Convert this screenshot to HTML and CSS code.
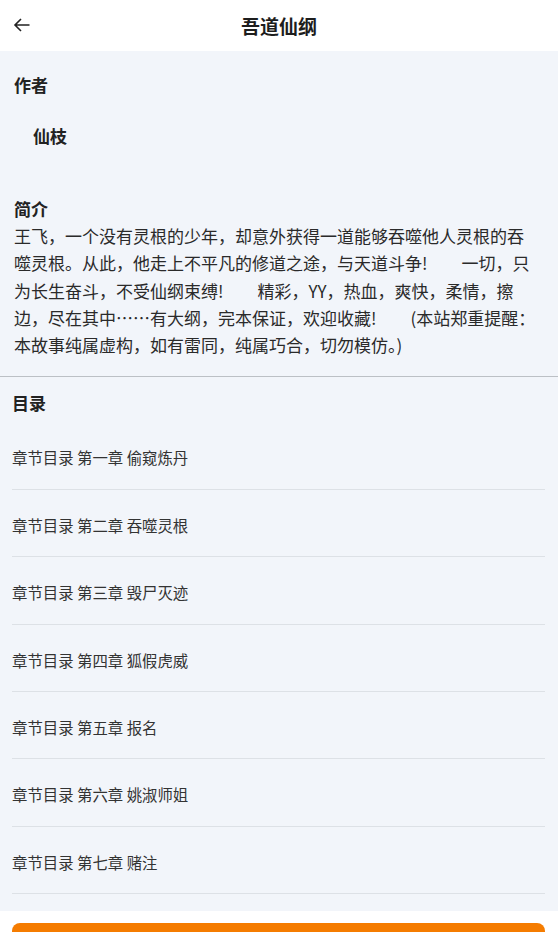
FILE: index.html
```html
<!doctype html>
<html lang="zh-CN">
  <head>
    <meta charset="UTF-8" />
    <meta name="viewport" content="width=device-width, initial-scale=1.0" />
    <title>吾道仙纲</title>
    <link rel="stylesheet" href="styles.css">
  </head>
  <body>
    <header class="topbar">
      <svg class="back" width="18" height="18" viewBox="0 0 18 18">
        <path d="M16.5 9H2M8 3L2 9l6 6" fill="none" stroke="#222" stroke-width="1.6" />
      </svg>
      <h1 class="title">吾道仙纲</h1>
    </header>

    <main class="detail">
      <section class="info">
        <h2 class="label">作者</h2>
        <p class="author">仙枝</p>
        <h2 class="label intro-label">简介</h2>
        <p class="intro">王飞，一个没有灵根的少年，却意外获得一道能够吞噬他人灵根的吞噬灵根。从此，他走上不平凡的修道之途，与天道斗争!　　一切，只为长生奋斗，不受仙纲束缚!　　精彩，YY，热血，爽快，柔情，擦边，尽在其中……有大纲，完本保证，欢迎收藏!　　(本站郑重提醒：本故事纯属虚构，如有雷同，纯属巧合，切勿模仿。)</p>
      </section>

      <section class="catalog">
        <h2 class="label">目录</h2>
        <ul class="chapters">
          <li>章节目录 第一章 偷窥炼丹</li>
          <li>章节目录 第二章 吞噬灵根</li>
          <li>章节目录 第三章 毁尸灭迹</li>
          <li>章节目录 第四章 狐假虎威</li>
          <li>章节目录 第五章 报名</li>
          <li>章节目录 第六章 姚淑师姐</li>
          <li>章节目录 第七章 赌注</li>
        </ul>
      </section>
    </main>

    <footer class="actions">
      <button class="read-btn">开始阅读</button>
    </footer>
  </body>
</html>
```

FILE: styles.css
```css
body {
  margin: 0;
  font-family: "Noto Sans CJK SC", "Noto Sans", sans-serif;
  color: #222;
  background: #fff;
}
.topbar {
  height: 51px;
  display: flex;
  align-items: center;
  justify-content: center;
  position: relative;
  background: #fff;
}
.back {
  position: absolute;
  left: 13px;
  top: 16px;
}
.title {
  margin: 0;
  font-size: 19px;
  font-weight: bold;
  color: #1d1d1d;
}
.detail {
  background: #f2f5fa;
  padding-bottom: 17px;
}
.label {
  margin: 0;
  font-size: 17px;
  line-height: 27px;
  font-weight: bold;
  color: #222;
}
.info {
  padding: 20px 14px 18px;
  border-bottom: 1px solid #bcc0c5;
}
.author {
  margin: 24px 0 0;
  padding-left: 19px;
  font-size: 17px;
  line-height: 27px;
  font-weight: bold;
}
.intro-label {
  margin-top: 46px;
}
.intro {
  margin: 0 8px 0 0;
  font-size: 17px;
  line-height: 27.3px;
  color: #2a2a2a;
}
.catalog {
  padding-top: 12px;
}
.catalog .label {
  padding-left: 12px;
}
.chapters {
  list-style: none;
  margin: 6px 13px 0 12px;
  padding: 0;
}
.chapters li {
  padding: 25px 0 21.4px;
  font-size: 15.4px;
  line-height: 20px;
  color: #333;
  border-bottom: 1px solid #dde1e6;
}
.actions {
  padding: 12px 13px 12px 12px;
  background: #fff;
}
.read-btn {
  display: block;
  width: 100%;
  height: 44px;
  border: none;
  border-radius: 8px;
  background: #f57c00;
  color: #fff;
  font-family: inherit;
  font-size: 16px;
}
```
